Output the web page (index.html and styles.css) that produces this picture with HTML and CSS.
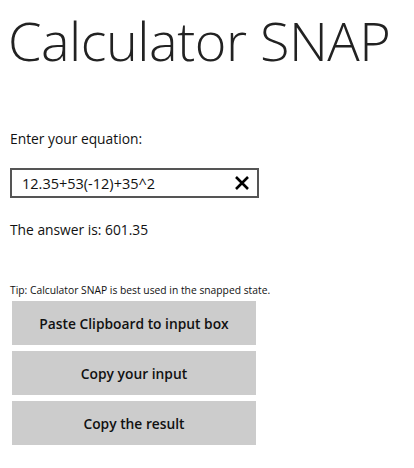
FILE: index.html
```html
<!DOCTYPE html>
<html>
<head>
<meta charset="utf-8">
<link rel="stylesheet" href="styles.css">
</head>
<body>
<div class="page">
  <h1 class="title">Calculator SNAP</h1>
  <div class="label">Enter your equation:</div>
  <div class="inputbox">
    <span class="inputtext">12.35+53(-12)+35^2</span>
    <svg class="clear" width="16" height="14" viewBox="0 0 16 14"><path d="M2 1 L14 13 M14 1 L2 13" stroke="#000" stroke-width="2.6" fill="none"/></svg>
  </div>
  <div class="answer">The answer is: 601.35</div>
  <div class="tip">Tip: Calculator SNAP is best used in the snapped state.</div>
  <div class="buttons">
    <div class="btn">Paste Clipboard to input box</div>
    <div class="btn">Copy your input</div>
    <div class="btn">Copy the result</div>
  </div>
</div>
</body>
</html>
```
FILE: styles.css
```css
html, body { margin: 0; padding: 0; background: #fff; }
body { font-family: "Open Sans", "Noto Sans", sans-serif; color: #111; }
.page { padding: 0 0 0 10px; width: 404px; }
.title {
  margin: 0;
  font-weight: 300;
  font-size: 54px;
  line-height: 80px;
  color: #222;
  letter-spacing: -0.5px;
  white-space: nowrap;
  margin-left: -2px;
}
.label { margin-top: 49px; font-size: 13.8px; line-height: 20px; }
.inputbox {
  margin-top: 19px;
  height: 26px;
  border: 2px solid #555;
  display: flex;
  align-items: center;
  justify-content: space-between;
  padding: 0 7px 0 10px;
  box-sizing: content-box;
  width: 228px;
}
.inputtext { font-size: 14.5px; color: #111; }
.clear { display: block; }
.answer { margin-top: 22px; font-size: 13.8px; line-height: 20px; }
.tip { margin-top: 43px; font-size: 10.3px; line-height: 14px; }
.buttons { display: flex; flex-direction: column; gap: 6px; margin-top: 4px; padding-left: 2px; }
.btn {
  width: 244px;
  height: 44px;
  background: #ccc;
  display: flex;
  align-items: center;
  justify-content: center;
  font-size: 13.8px;
  font-weight: 600;
  color: #111;
}
```
